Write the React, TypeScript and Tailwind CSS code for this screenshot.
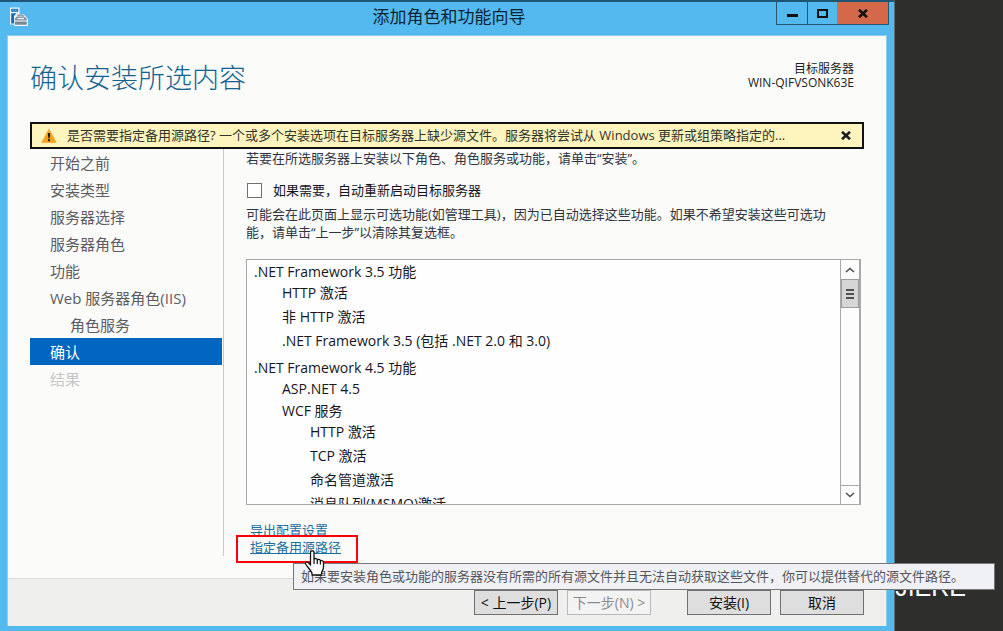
import { useState } from "react"

interface Recurso {
    nome: string
    filhos?: Recurso[]
}

interface Passo {
    nome: string
    estado?: "atual" | "desativado"
    nivel?: number
}

const passos: Passo[] = [
    { nome: "开始之前" },
    { nome: "安装类型" },
    { nome: "服务器选择" },
    { nome: "服务器角色" },
    { nome: "功能" },
    { nome: "Web 服务器角色(IIS)" },
    { nome: "角色服务", nivel: 1 },
    { nome: "确认", estado: "atual" },
    { nome: "结果", estado: "desativado" },
]

const recursos: Recurso[] = [
    {
        nome: ".NET Framework 3.5 功能",
        filhos: [
            { nome: "HTTP 激活" },
            { nome: "非 HTTP 激活" },
            { nome: ".NET Framework 3.5 (包括 .NET 2.0 和 3.0)" },
        ],
    },
    {
        nome: ".NET Framework 4.5 功能",
        filhos: [
            { nome: "ASP.NET 4.5" },
            {
                nome: "WCF 服务",
                filhos: [
                    { nome: "HTTP 激活" },
                    { nome: "TCP 激活" },
                    { nome: "命名管道激活" },
                    { nome: "消息队列(MSMQ)激活" },
                ],
            },
        ],
    },
]

function ServerIcon() {
    return (
        <svg width="20" height="20" viewBox="0 0 20 20" fill="none">
            <path d="M1 .5h9.500v6.500h4l4.500 5v7H5v-1.500H1z" fill="#eef7fc" />
            <path d="M2.200 1.800h7v3h-7z" fill="#1769b5" />
            <path d="M2.200 6.200h5.500L5 9v7.500H2.200z" fill="#1769b5" />
            <path d="M3.200 3.200h5" stroke="#6fb0e0" />
            <path d="M5.800 11.500L8 9.500h7l2.700 2v2H5.800z" fill="#8794a0" />
            <path d="M9 9.500V8.200h5v1.300" stroke="#7b8994" strokeWidth="1.200" />
            <path d="M8.500 11.500h6.500" stroke="#eef7fc" strokeWidth="1.200" />
            <path d="M5.800 14.500h12v3.300h-12z" fill="#7b8994" />
        </svg>
    )
}

function WarningIcon() {
    return (
        <svg width="16" height="16" viewBox="0 0 16 16">
            <path d="M8 1.200L15.200 14.500H0.800z" fill="#f9a11b" stroke="#f3b23c" strokeWidth="1" strokeLinejoin="round" />
            <path d="M6.800 5h2.400l-.5 5.200H7.300z" fill="#221a0a" />
            <rect x="7" y="11.200" width="2" height="2" fill="#221a0a" />
        </svg>
    )
}

function CloseIcon() {
    return (
        <svg width="10" height="9" viewBox="0 0 10 9" fill="none">
            <path d="M1 .8L9 8.200M9 .8L1 8.200" stroke="currentColor" strokeWidth="2.600" />
        </svg>
    )
}

function HandCursor() {
    return (
        <svg width="22" height="28" viewBox="0 0 22 28" className="absolute left-[54px] top-[11px] z-20 pointer-events-none">
            <path
                d="M6.500 2.500c0-2.200 3.500-2.200 3.500 0V9c1-.9 3-.6 3.300.8 1-.8 2.800-.4 3.100 1 1.200-.7 3.100 0 3.100 1.800v4.400c0 2.500-1.500 4-2 6v2H8v-2c-1.500-3-4.500-6-6.300-9-.8-1.600 1-2.800 2.300-1.600L6.500 15z"
                fill="#fff"
                stroke="#111"
                strokeWidth="1.300"
                strokeLinejoin="round"
            />
            <path d="M10 9v5M13.300 10v4M16.400 11v3.500" stroke="#111" strokeWidth="1.200" />
        </svg>
    )
}

function ListaDeRecursos({ itens, raiz }: { itens: Recurso[], raiz?: boolean }) {
    return (
        <ul className={raiz ? "flex flex-col gap-[5px]" : "pl-7"}>
            {itens.map((item) => (
                <li key={item.nome} className="whitespace-nowrap">
                    <div className={item.filhos ? "leading-[19px]" : "leading-6"}>{item.nome}</div>
                    {item.filhos && <ListaDeRecursos itens={item.filhos} />}
                </li>
            ))}
        </ul>
    )
}

function BarraDeRolagem() {
    return (
        <div className="flex w-5 shrink-0 flex-col border-x border-[#a9a9a9] bg-[#fdfdfd]">
            <button aria-label="向上滚动" className="flex h-[19px] items-center justify-center">
                <svg width="10" height="6" viewBox="0 0 10 6" fill="none"><path d="M1 5l4-3.500L9 5" stroke="#505050" strokeWidth="1.600" /></svg>
            </button>
            <div className="flex h-[29px] flex-col items-center justify-center gap-[2px] border border-[#9c9c9c] bg-[#d6d6d6]">
                <span className="h-[2px] w-2 bg-[#505050]" />
                <span className="h-[2px] w-2 bg-[#505050]" />
                <span className="h-[2px] w-2 bg-[#505050]" />
            </div>
            <button aria-label="向下滚动" className="mt-auto flex h-[19px] items-center justify-center border-t border-[#a9a9a9]">
                <svg width="10" height="6" viewBox="0 0 10 6" fill="none"><path d="M1 1l4 3.500L9 1" stroke="#505050" strokeWidth="1.600" /></svg>
            </button>
        </div>
    )
}

export default function App() {
    const [reiniciar, setReiniciar] = useState(false)
    const [avisoAberto, setAvisoAberto] = useState(true)

    return (
        <div className="relative h-screen overflow-hidden bg-[#2e2e2d] pr-[108px] font-['Open_Sans','Noto_Sans_CJK_SC',sans-serif] text-[13px] text-[#1c1c24]">
            {/* texto do papel de parede, quase todo atrás da janela */}
            <span className="absolute bottom-[30px] right-[37px] font-['Liberation_Sans',sans-serif] text-[25px] leading-7 text-white">JIERE</span>

            <div className="relative flex h-full flex-col border-t-2 border-t-[#1d5674] border-r border-r-[#5d6f78] bg-[#54b9ee]">
                <header className="flex h-[33px] shrink-0 items-start">
                    <div className="flex flex-1 pl-[9px] pt-[5px]"><ServerIcon /></div>
                    <h1 className="text-[17px] leading-[30px] text-[#0c2433]">添加角色和功能向导</h1>
                    <div className="flex flex-1 justify-end pr-[5px]">
                        <div className="flex h-[23px] border border-t-0 border-[#24566f] text-[#111]">
                            <button aria-label="最小化" className="flex w-[31px] items-center justify-center border-r border-[#24566f]">
                                <span className="mt-1 h-[3px] w-[11px] bg-[#111]" />
                            </button>
                            <button aria-label="最大化" className="flex w-[29px] items-center justify-center">
                                <span className="h-[9px] w-[11px] border-2 border-[#111]" />
                            </button>
                            <button aria-label="关闭" className="flex w-[51px] items-center justify-center bg-[#d4694a]">
                                <CloseIcon />
                            </button>
                        </div>
                    </div>
                </header>

                <div className="mx-[7px] mb-[5px] flex min-h-0 flex-1 flex-col border border-b-0 border-[#8fcdec] bg-[#fbfbfa]">
                    <div className="flex h-[86px] shrink-0 items-start justify-between pl-[22px] pr-8 pt-6">
                        <h2 className="text-[27px] font-light leading-[36px] text-[#12628f]">确认安装所选内容</h2>
                        <div className="pt-[2px] text-right text-[12px] leading-[14px]">
                            <div>目标服务器</div>
                            <div>WIN-QIFVSONK63E</div>
                        </div>
                    </div>

                    {avisoAberto && (
                        <div className="mx-[22px] flex h-[27px] shrink-0 items-center border-2 border-[#111] bg-[#fdf5bd] pl-[9px] pr-[11px]">
                            <WarningIcon />
                            <span className="min-w-0 flex-1 truncate pl-[10px] text-[#33332c]">
                                是否需要指定备用源路径? 一个或多个安装选项在目标服务器上缺少源文件。服务器将尝试从 Windows 更新或组策略指定的...
                            </span>
                            <button aria-label="关闭警告" onClick={() => setAvisoAberto(false)}><CloseIcon /></button>
                        </div>
                    )}

                    <div className="flex min-h-0 flex-1">
                        <nav className="ml-[22px] mb-[22px] w-[194px] shrink-0 border-r border-[#c9c9c9] pr-[1px] text-[15px] leading-[29px] text-[#5c5c62]">
                            {passos.map((passo) => (
                                <button
                                    key={passo.nome}
                                    disabled={passo.estado === "desativado"}
                                    className={
                                        "block h-[27px] w-full text-left " +
                                        (passo.nivel ? "pl-10 " : "pl-5 ") +
                                        (passo.estado === "atual" ? "bg-[#0066c0] text-white" : passo.estado === "desativado" ? "text-[#c6c6c6]" : "")
                                    }
                                >
                                    {passo.nome}
                                </button>
                            ))}
                        </nav>

                        <main className="flex min-w-0 flex-1 flex-col pl-[22px] pr-[25px] leading-[18px] text-[#30343f]">
                            <p>若要在所选服务器上安装以下角色、角色服务或功能，请单击“安装”。</p>
                            <label className="mt-[14px] flex items-center gap-[11px] text-[#14141c]">
                                <input
                                    type="checkbox"
                                    checked={reiniciar}
                                    onChange={(e) => setReiniciar(e.target.checked)}
                                    className="ml-[1px] size-[15px] appearance-none border border-[#707070] bg-white checked:bg-[#0066c0]"
                                />
                                如果需要，自动重新启动目标服务器
                            </label>
                            <p className="mt-[6px] pr-5">
                                可能会在此页面上显示可选功能(如管理工具)，因为已自动选择这些功能。如果不希望安装这些可选功能，请单击“上一步”以清除其复选框。
                            </p>

                            <div className="mt-[18px] flex min-h-0 flex-1 border border-[#a9a9a9] bg-[#fefefe] text-[14px] text-[#16161e]">
                                <div className="min-w-0 flex-1 overflow-hidden pl-[7px] pt-[2px]">
                                    <ListaDeRecursos itens={recursos} raiz />
                                </div>
                                <BarraDeRolagem />
                            </div>

                            <div className="mb-[22px] mt-[17px] flex flex-col items-start pl-1 leading-[17px] text-[#1b6f9f]">
                                <a href="#exportar" className="underline">导出配置设置</a>
                                <div className="relative">
                                    <a href="#origem" className="underline">指定备用源路径</a>
                                    {/* destaque vermelho em volta do link */}
                                    <span className="pointer-events-none absolute -left-[14px] -top-1 h-7 w-[122px] border-2 border-[#fb0007]" />
                                    <div role="tooltip" className="absolute left-[43px] top-6 z-10 h-[27px] w-[702px] whitespace-nowrap border border-[#77777a] bg-[#f0f1f5] pl-[7px] leading-[25px] text-[#55555c]">
                                        如果要安装角色或功能的服务器没有所需的所有源文件并且无法自动获取这些文件，你可以提供替代的源文件路径。
                                    </div>
                                    <HandCursor />
                                </div>
                            </div>
                        </main>
                    </div>

                    <footer className="flex h-12 shrink-0 items-center justify-end border-t border-[#dcdcdc] bg-[#efefee] pr-[22px] text-[14px] text-[#111]">
                        <button className="h-[25px] w-[84px] border border-[#707070] bg-[#dedede]">&lt; 上一步(P)</button>
                        <button disabled className="ml-[9px] h-[25px] w-[84px] border border-[#b9b9b9] bg-[#f3f3f3] text-[#8c8c8c]">下一步(N) &gt;</button>
                        <button className="ml-9 h-[25px] w-[84px] border border-[#707070] bg-[#dedede]">安装(I)</button>
                        <button className="ml-[9px] h-[25px] w-[84px] border border-[#707070] bg-[#dedede]">取消</button>
                    </footer>
                </div>
            </div>
        </div>
    )
}
